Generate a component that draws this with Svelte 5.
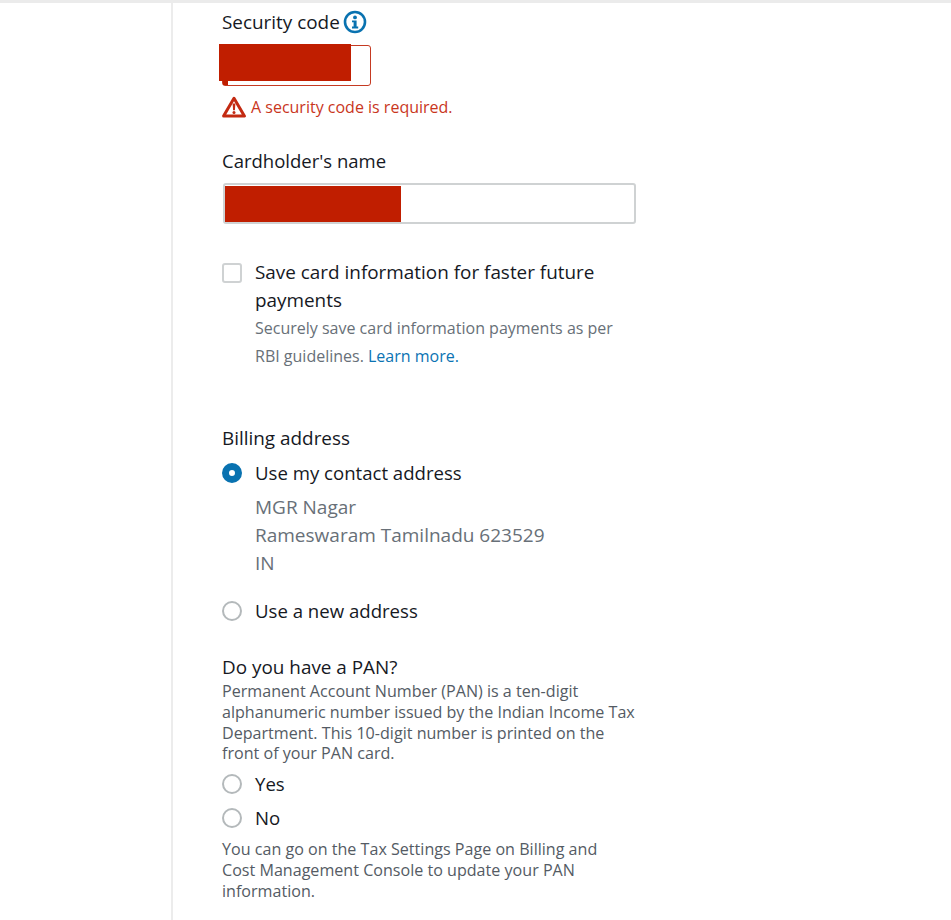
<script lang="ts">
	// Payment form: security code, cardholder, billing address and PAN
	const addressLines = ['MGR Nagar', 'Rameswaram Tamilnadu 623529', 'IN'];
</script>

<div class="page">
	<main class="panel">
		<div class="label-row code-label">
			<span class="label">Security code</span>
			<svg class="info" viewBox="0 0 24 24" width="24" height="24" aria-hidden="true">
				<circle cx="12" cy="12" r="10" fill="#fff" stroke="#0972b0" stroke-width="2.6" />
				<circle cx="12" cy="7.4" r="1.9" fill="#0972b0" />
				<path d="M9 10.4h4.6v6.2h1.6v1.9H9v-1.9h1.6v-4.3H9z" fill="#0972b0" />
			</svg>
		</div>
		<div class="code-input">
			<div class="redact code-redact"></div>
			<div class="redact code-tail"></div>
		</div>
		<div class="error">
			<svg viewBox="0 0 24 22" width="24" height="22" aria-hidden="true">
				<path d="M12 2.2 22.4 20H1.6z" fill="none" stroke="#c32a12" stroke-width="3" stroke-linejoin="round" />
				<path d="M10.6 7.6h2.8l-.5 6.6h-1.8z" fill="#c32a12" />
				<circle cx="12" cy="16.6" r="1.5" fill="#c32a12" />
			</svg>
			<span>A security code is required.</span>
		</div>

		<div class="label name-label">Cardholder's name</div>
		<div class="name-input">
			<div class="redact name-redact"></div>
		</div>

		<div class="option save">
			<span class="checkbox"></span>
			<div class="option-body">
				<div class="option-title save-title">Save card information for faster future payments</div>
				<p class="hint">Securely save card information payments as per RBI guidelines. <a href="#learn">Learn more.</a></p>
			</div>
		</div>

		<div class="label billing-label">Billing address</div>
		<div class="option contact">
			<span class="radio checked"></span>
			<div class="option-title">Use my contact address</div>
		</div>
		<div class="address">
			{#each addressLines as line}
				<div>{line}</div>
			{/each}
		</div>
		<div class="option new-address">
			<span class="radio"></span>
			<div class="option-title">Use a new address</div>
		</div>

		<div class="label pan-label">Do you have a PAN?</div>
		<p class="note">Permanent Account Number (PAN) is a ten-digit alphanumeric number issued by the Indian Income Tax Department. This 10-digit number is printed on the front of your PAN card.</p>
		<div class="option yes">
			<span class="radio"></span>
			<div class="option-title">Yes</div>
		</div>
		<div class="option no">
			<span class="radio"></span>
			<div class="option-title">No</div>
		</div>
		<p class="note footer">You can go on the Tax Settings Page on Billing and Cost Management Console to update your PAN information.</p>
	</main>
</div>

<style>
	:global(body) {
		margin: 0;
		background: #fff;
	}

	.page {
		height: 920px;
		overflow: hidden;
		box-sizing: border-box;
		border-top: 3px solid #ebebeb;
		font-family: "Open Sans", "Noto Sans", sans-serif;
		color: #16191f;
	}

	.panel {
		box-sizing: border-box;
		height: 100%;
		margin-left: 171px;
		width: 780px;
		padding-left: 49px;
		border-left: 2px solid #ececec;
	}

	.label {
		font-size: 18.9px;
		line-height: 28px;
	}

	.label-row {
		display: flex;
		align-items: center;
		gap: 3px;
	}

	.code-label {
		padding-top: 5px;
	}

	.code-input {
		position: relative;
		box-sizing: border-box;
		width: 149px;
		height: 41px;
		margin-top: 9px;
		border: 1px solid #c53a22;
		border-radius: 3px;
	}

	.redact {
		position: absolute;
		background: #c01e00;
	}

	.code-redact {
		left: -4px;
		top: -2px;
		width: 132px;
		height: 37px;
	}

	.code-tail {
		left: 0;
		top: 35px;
		width: 5px;
		height: 4px;
	}

	.error {
		display: flex;
		align-items: center;
		gap: 5px;
		margin-top: 9px;
		font-size: 16px;
		line-height: 24px;
		color: #c9361d;
	}

	.name-label {
		margin-top: 28px;
		font-size: 18.5px;
	}

	.name-input {
		position: relative;
		box-sizing: border-box;
		width: 413px;
		height: 41px;
		margin-top: 8px;
		margin-left: 1px;
		border: 2px solid #cfd2d3;
		border-radius: 3px;
	}

	.name-redact {
		left: 0;
		top: 1px;
		width: 176px;
		height: 36px;
	}

	.option {
		display: flex;
		gap: 13px;
	}

	.option-title {
		font-size: 18.6px;
		line-height: 28px;
	}

	.save-title {
		font-size: 18.9px;
	}

	.save {
		margin-top: 34px;
		width: 400px;
	}

	.checkbox {
		flex: none;
		box-sizing: border-box;
		width: 20px;
		height: 20px;
		margin-top: 5px;
		border: 2px solid #cfd2d3;
		border-radius: 3px;
	}

	.hint {
		margin: 0;
		font-size: 16px;
		line-height: 28px;
		color: #687078;
	}

	.hint a {
		color: #0b73b3;
		text-decoration: none;
	}

	.billing-label {
		margin-top: 54px;
	}

	.contact {
		margin-top: 7px;
	}

	.radio {
		flex: none;
		box-sizing: border-box;
		width: 20px;
		height: 20px;
		margin-top: 4px;
		border: 2px solid #b4b9bb;
		border-radius: 50%;
		background: #fff;
	}

	.radio.checked {
		border: 7px solid #0972b0;
	}

	.address {
		margin: 6px 0 0 33px;
		font-size: 19px;
		line-height: 28px;
		color: #687078;
	}

	.new-address {
		margin-top: 20px;
	}

	.pan-label {
		margin-top: 28px;
	}

	.note {
		margin: 0;
		width: 414px;
		font-size: 16.1px;
		line-height: 20.8px;
		color: #545b64;
	}

	.yes {
		margin-top: 6px;
	}

	.no {
		margin-top: 6px;
	}

	.footer {
		width: 405px;
		margin-top: 7px;
	}
</style>
